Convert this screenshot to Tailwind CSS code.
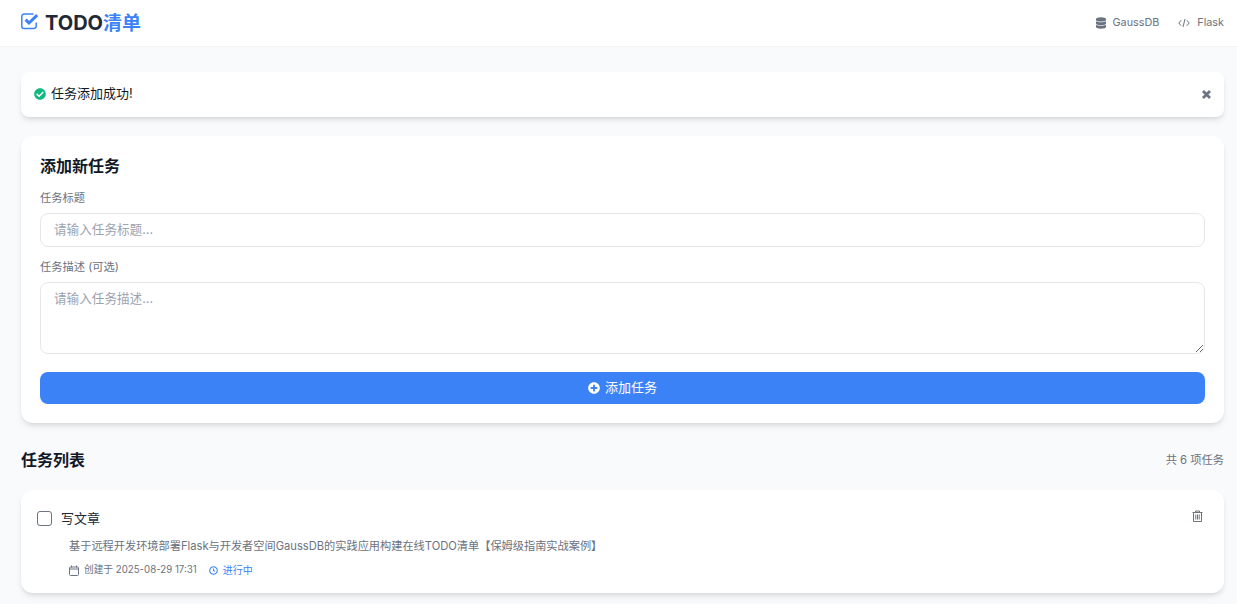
<!DOCTYPE html>
<html lang="zh-CN">
<head>
    <meta charset="UTF-8">
    <meta name="viewport" content="width=device-width, initial-scale=1.0">
    <title>TODO清单</title>
    <script src="https://cdn.jsdelivr.net/npm/@tailwindcss/browser@4"></script>
</head>
<body class="h-screen overflow-hidden bg-[#f9fafb] text-[#1f2937] font-['Inter','Noto_Sans_CJK_SC',sans-serif]">
    <!-- Header -->
    <header class="h-[47px] bg-white border-b border-[#f3f4f6] pl-[21px] pr-[13px] flex justify-between items-center">
        <div class="flex items-center">
            <svg class="w-[18px] h-[17px] text-[#3b82f6] mr-[6px] -mt-[4px]" viewBox="0 0 18 17" fill="none" stroke="currentColor"><path d="M15.2 9.5 V13.2 A2.3 2.3 0 0 1 12.9 15.5 H3.1 A2.3 2.3 0 0 1 .8 13.2 V3.4 A2.3 2.3 0 0 1 3.1 1.1 H12.5" stroke-width="1.5"></path><path d="M4.6 6.6 L8 10 L16.2 2.2" stroke-width="3"></path></svg>
            <h1 class="text-xl leading-7 font-bold text-[#1f2937]">TODO<span class="text-[19px] text-[#3b82f6]">清单</span></h1>
        </div>
        <div class="flex items-center text-[10.8px] text-[#6b7280]">
            <svg class="w-[10px] h-[12px] mr-[7px]" viewBox="0 0 448 512" fill="currentColor"><path d="M448 73.143v45.714C448 159.143 347.667 192 224 192S0 159.143 0 118.857V73.143C0 32.857 100.333 0 224 0s224 32.857 224 73.143zM448 176v102.857C448 319.143 347.667 352 224 352S0 319.143 0 278.857V176c48.125 33.143 136.208 48.572 224 48.572S399.874 209.143 448 176zm0 160v102.857C448 479.143 347.667 512 224 512S0 479.143 0 438.857V336c48.125 33.143 136.208 48.572 224 48.572S399.874 369.143 448 336z"></path></svg>
            <span>GaussDB</span>
            <svg class="w-[12px] h-[12px] ml-[19px] mr-[7px]" viewBox="0 0 12 12" fill="none" stroke="currentColor" stroke-width="1"><path d="M3.2 3.2 L.8 6 L3.2 8.8 M8.8 3.2 L11.2 6 L8.8 8.8 M7 2 L5 10"></path></svg>
            <span>Flask</span>
        </div>
    </header>

    <main class="pl-[21px] pr-[13px] pt-[25px]">
        <!-- Alert -->
        <div class="h-[45px] bg-white rounded-lg shadow-md px-[13px] flex items-center justify-between mb-[19px]">
            <div class="flex items-center text-[13px] text-[#111827] -mt-[2px]">
                <svg class="w-[12px] h-[12px] text-[#10b981] mr-[5px]" viewBox="0 0 512 512" fill="currentColor"><path d="M504 256c0 136.967-111.033 248-248 248S8 392.967 8 256 119.033 8 256 8s248 111.033 248 248zM227.314 387.314l184-184c6.248-6.248 6.248-16.379 0-22.627l-22.627-22.627c-6.248-6.249-16.379-6.249-22.628 0L216 308.118l-70.059-70.059c-6.248-6.248-16.379-6.248-22.628 0l-22.627 22.627c-6.248 6.248-6.248 16.379 0 22.627l104 104c6.249 6.249 16.379 6.249 22.628.001z"></path></svg>
                <span>任务添加成功!</span>
            </div>
            <svg class="w-[9px] h-[9px] text-[#6b7280]" viewBox="0 0 9 9" fill="none" stroke="currentColor" stroke-width="2.8"><path d="M1 1 L8 8 M8 1 L1 8"></path></svg>
        </div>

        <!-- Add form -->
        <section class="h-[287px] bg-white rounded-xl shadow-md px-[19px] pt-[18px] mb-[23px]">
            <h2 class="text-base leading-[24px] font-semibold text-[#111827] mb-[12px]">添加新任务</h2>
            <label class="block text-[11.25px] leading-[16px] text-[#6b7280] mb-[7px]">任务标题</label>
            <input type="text" placeholder="请输入任务标题..." class="block w-full h-[34px] px-[13px] pb-[2px] text-[12.6px] border border-[#e5e7eb] rounded-lg placeholder:text-[#9ca3af] mb-[12px]">
            <label class="block text-[11.25px] leading-[16px] text-[#6b7280] mb-[7px]">任务描述 (可选)</label>
            <textarea placeholder="请输入任务描述..." class="block w-full h-[72px] px-[13px] py-[6px] text-[12.6px] leading-[20px] border border-[#e5e7eb] rounded-lg placeholder:text-[#9ca3af] mb-[18px]"></textarea>
            <button class="w-full h-[32px] bg-[#3b82f6] text-white text-[13px] rounded-lg flex items-center justify-center">
                <svg class="w-[12px] h-[12px] mr-[5px]" viewBox="0 0 512 512" fill="currentColor"><path d="M256 8C119 8 8 119 8 256s111 248 248 248 248-111 248-248S393 8 256 8zm144 276c0 6.6-5.4 12-12 12h-92v92c0 6.6-5.4 12-12 12h-56c-6.6 0-12-5.4-12-12v-92h-92c-6.6 0-12-5.4-12-12v-56c0-6.6 5.4-12 12-12h92v-92c0-6.6 5.4-12 12-12h56c6.6 0 12 5.4 12 12v92h92c6.6 0 12 5.4 12 12v56z"></path></svg>
                添加任务
            </button>
        </section>

        <!-- Task list -->
        <div class="flex justify-between items-center h-[28px] mb-[16px]">
            <h2 class="text-base font-semibold text-[#111827]">任务列表</h2>
            <span class="text-[11.25px] text-[#6b7280]">共 6 项任务</span>
        </div>

        <article class="h-[103px] bg-white rounded-xl shadow-md pl-[16px] pr-[21px] pt-[18px] flex justify-between">
            <div>
                <div class="flex items-center h-[22px]">
                    <span class="w-[15px] h-[15px] -mt-[1px] border-[1.5px] border-[#6b7280] rounded-[3px] mr-[9px]"></span>
                    <span class="text-[13px] text-[#1f2937]">写文章</span>
                </div>
                <p class="pl-[32px] mt-[8px] text-[11.2px] leading-[16px] text-[#6b7280]">基于远程开发环境部署Flask与开发者空间GaussDB的实践应用构建在线TODO清单【保姆级指南实战案例】</p>
                <div class="pl-[32px] mt-[8px] flex items-center text-[9.7px] leading-[16px] text-[#6b7280]">
                    <svg class="w-[10px] h-[11px] mr-[5px]" viewBox="0 0 10 11" fill="none" stroke="currentColor"><rect x=".5" y="2" width="9" height="8.5" rx="1"></rect><path d="M.5 4 H9.5 M2.5 .5 V2.5 M7.5 .5 V2.5"></path></svg>
                    <span>创建于 2025-08-29 17:31</span>
                    <svg class="w-[9px] h-[9px] ml-[12px] mr-[5px] text-[#3b82f6]" viewBox="0 0 10 10" fill="none" stroke="currentColor" stroke-width="1.2"><circle cx="5" cy="5" r="4.2"></circle><path d="M5 2.8 V5.2 L6.6 5.8"></path></svg>
                    <span class="text-[10px] text-[#3b82f6]">进行中</span>
                </div>
            </div>
            <svg class="w-[11px] h-[12px] mt-[2px] text-[#6b7280]" viewBox="0 0 11 12" fill="none" stroke="currentColor"><path d="M.5 2.5 H10.5 M3.5 2.5 V1 H7.5 V2.5 M1.5 2.5 V11.5 H9.5 V2.5 M3.8 4.5 V9.5 M5.5 4.5 V9.5 M7.2 4.5 V9.5"></path></svg>
        </article>
    </main>
</body>
</html>
